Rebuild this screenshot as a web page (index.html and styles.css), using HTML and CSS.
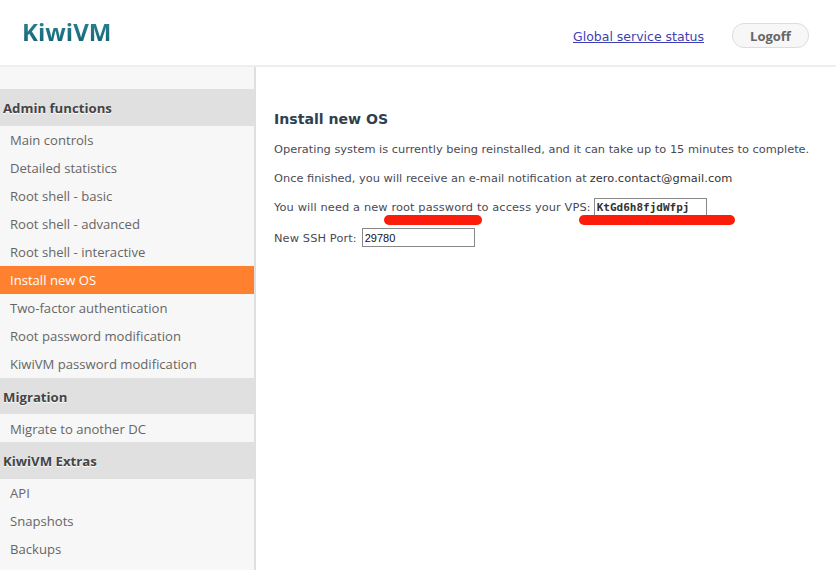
FILE: index.html
```html
<!DOCTYPE html>
<html lang="en">
<head>
<meta charset="utf-8">
<title>KiwiVM - Install new OS</title>
<link rel="stylesheet" href="styles.css">
</head>
<body>
<header class="topbar">
  <div class="logo">KiwiVM</div>
  <div class="top-actions">
    <a class="status-link" href="#">Global service status</a>
    <a class="logoff" href="#">Logoff</a>
  </div>
</header>
<div class="layout">
  <nav class="sidebar">
    <h3 class="nav-heading">Admin functions</h3>
    <a class="nav-item" href="#">Main controls</a>
    <a class="nav-item" href="#">Detailed statistics</a>
    <a class="nav-item" href="#">Root shell - basic</a>
    <a class="nav-item" href="#">Root shell - advanced</a>
    <a class="nav-item" href="#">Root shell - interactive</a>
    <a class="nav-item active" href="#">Install new OS</a>
    <a class="nav-item" href="#">Two-factor authentication</a>
    <a class="nav-item" href="#">Root password modification</a>
    <a class="nav-item" href="#">KiwiVM password modification</a>
    <h3 class="nav-heading short">Migration</h3>
    <a class="nav-item" href="#">Migrate to another DC</a>
    <h3 class="nav-heading">KiwiVM Extras</h3>
    <a class="nav-item" href="#">API</a>
    <a class="nav-item" href="#">Snapshots</a>
    <a class="nav-item" href="#">Backups</a>
  </nav>
  <main class="content">
    <h2 class="title">Install new OS</h2>
    <p class="line">Operating system is currently being reinstalled, and it can take up to 15 minutes to complete.</p>
    <p class="line">Once finished, you will receive an e-mail notification at<span class="email">zero.contact@gmail.com</span></p>
    <p class="line pw-line">You will need a new root password to access your VPS:<input class="pw-box" type="text" value="KtGd6h8fjdWfpj"></p>
    <p class="line port-line">New SSH Port:<input class="port-box" type="text" value="29780"></p>
    <span class="scribble scribble-a"></span>
    <span class="scribble scribble-b"></span>
  </main>
</div>
</body>
</html>
```
FILE: styles.css
```css
html, body {
  margin: 0;
  padding: 0;
  height: 570px;
  overflow: hidden;
  background: #fff;
}
.topbar {
  height: 65px;
  border-bottom: 2px solid #eeeeee;
  display: flex;
  align-items: center;
  justify-content: space-between;
  padding: 0 27px 0 22px;
  box-sizing: content-box;
}
.logo {
  font-family: "Open Sans", sans-serif;
  font-weight: 700;
  font-size: 24px;
  line-height: 30px;
  margin-top: -2px;
  background: linear-gradient(#2f8a96, #0f5f70);
  -webkit-background-clip: text;
  background-clip: text;
  color: transparent;
}
.top-actions {
  display: flex;
  align-items: center;
  gap: 28px;
  margin-top: 5px;
}
.status-link {
  font-family: "DejaVu Sans", sans-serif;
  font-size: 12.5px;
  color: #3f3fb5;
  margin-top: 3px;
}
.logoff {
  font-family: "Open Sans", sans-serif;
  font-weight: 700;
  font-size: 13px;
  color: #666;
  text-decoration: none;
  width: 75px;
  height: 23px;
  line-height: 25px;
  text-align: center;
  background: #f7f7f7;
  border: 1px solid #dddddd;
  border-radius: 12px;
}
.layout {
  display: flex;
  height: 503px;
}
.sidebar {
  width: 254px;
  flex: none;
  padding-top: 22px;
  background: #f7f7f7;
  border-right: 2px solid #dfdfdf;
  font-family: "Open Sans", sans-serif;
  overflow: hidden;
}
.nav-heading {
  margin: 0 -2px 0 0;
  height: 37px;
  line-height: 39px;
  padding-left: 3px;
  background: #e0e0e0;
  color: #444;
  font-size: 13.2px;
  font-weight: 700;
  text-shadow: 0 1px 1px #fff;
}
.nav-heading.short {
  height: 36px;
  line-height: 39px;
}
.nav-item {
  display: block;
  height: 28px;
  line-height: 29px;
  padding-left: 10px;
  font-size: 13.1px;
  color: #666;
  text-decoration: none;
}
.nav-heading.short + .nav-item {
  line-height: 31px;
}
.nav-item.active {
  background: #ff8130;
  color: #fff;
}
.content {
  position: relative;
  flex: 1;
  padding: 0 0 0 18px;
  font-family: "DejaVu Sans", sans-serif;
  font-size: 11.36px;
  color: #4a4a55;
}
.title {
  margin: 44px 0 0;
  font-size: 14.1px;
  line-height: 17px;
  font-weight: 700;
  color: #2f3f50;
}
.line {
  margin: 14px 0 0;
  line-height: 15px;
  white-space: nowrap;
}
.email {
  margin-left: 3px;
  letter-spacing: 0.08px;
  color: #333;
}
.pw-line, .port-line {
  letter-spacing: 0.11px;
}
.pw-line {
  margin-top: 12px;
}
.pw-box, .port-box {
  box-sizing: border-box;
  border: 1px solid #888;
  padding: 0 2px;
  margin: 0 0 0 3px;
  background: #fff;
  width: 113px;
  color: #111;
  outline: none;
}
.pw-box {
  height: 18px;
  font-family: "DejaVu Sans Mono", monospace;
  font-weight: 700;
  font-size: 11px;
  color: #333;
}
.port-box {
  height: 19px;
  margin-left: 5px;
  font-family: "Liberation Sans", sans-serif;
  font-size: 11px;
}
.port-line {
  margin-top: 12px;
}
.scribble {
  position: absolute;
  top: 148px;
  height: 10px;
  background: #fb1c0c;
  border-radius: 5px;
}
.scribble-a {
  left: 128px;
  width: 98px;
}
.scribble-b {
  left: 323px;
  width: 156px;
}
```
